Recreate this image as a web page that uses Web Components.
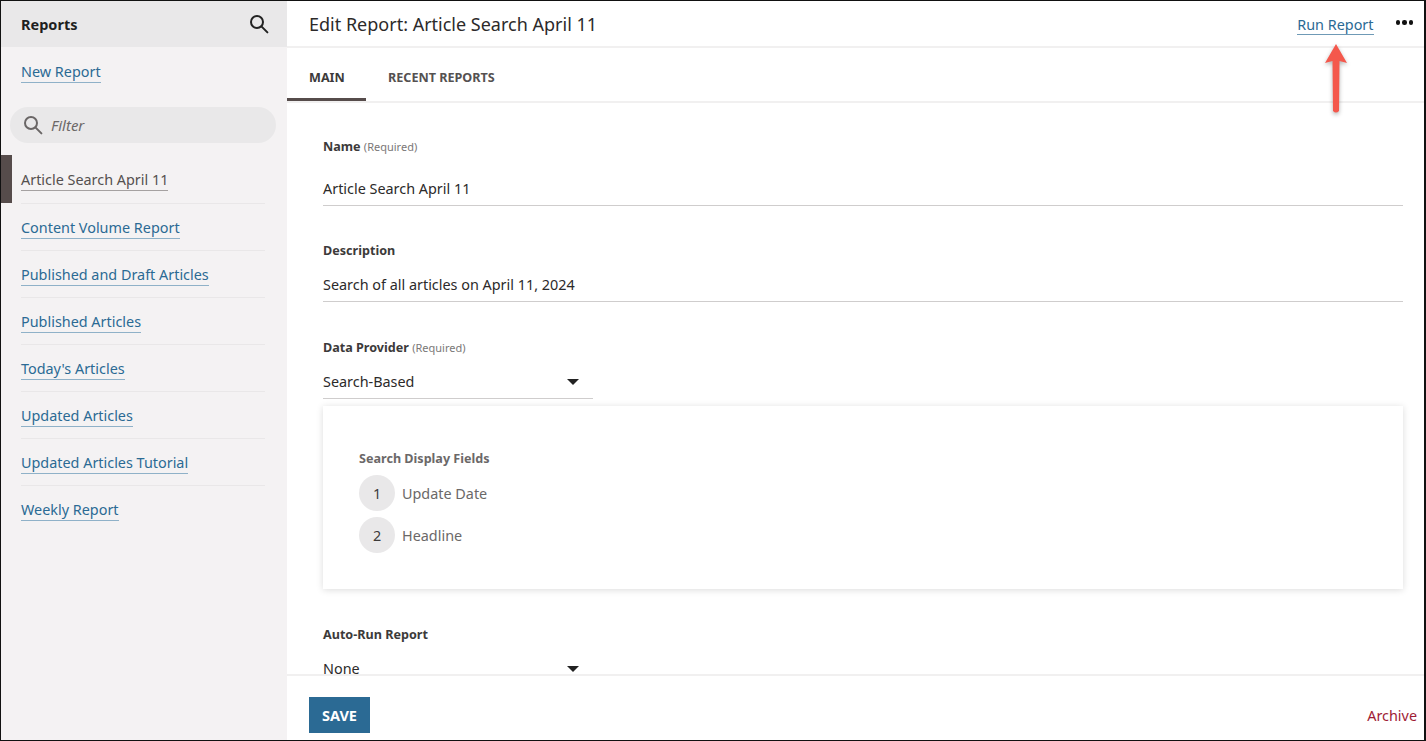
<!DOCTYPE html>
<html lang="en">
<head>
<meta charset="utf-8">
<title>Reports</title>
<style>
  html, body { margin: 0; height: 100%; background: #fff; }
  body { font-family: "Noto Sans", "Open Sans", sans-serif; overflow: hidden; }
</style>
</head>
<body>
<report-app>
  <report-sidebar slot="sidebar" active="Article Search April 11">
    <report-link href="#">Article Search April 11</report-link>
    <report-link href="#">Content Volume Report</report-link>
    <report-link href="#">Published and Draft Articles</report-link>
    <report-link href="#">Published Articles</report-link>
    <report-link href="#">Today's Articles</report-link>
    <report-link href="#">Updated Articles</report-link>
    <report-link href="#">Updated Articles Tutorial</report-link>
    <report-link href="#">Weekly Report</report-link>
  </report-sidebar>
  <report-editor slot="main"></report-editor>
</report-app>

<script>
const searchIcon = (size, color, sw) => `
  <svg width="${size}" height="${size}" viewBox="0 0 20 20" fill="none" stroke="${color}" stroke-width="${sw}" stroke-linecap="round">
    <circle cx="8" cy="8" r="6"/><path d="M12.4 12.4 18.4 18.4"/>
  </svg>`;

class ReportApp extends HTMLElement {
    constructor() {
        super();
        this.attachShadow({ mode: 'open' });
        this.shadowRoot.innerHTML = `
          <style>
            :host { display: flex; box-sizing: border-box; width: 1426px; height: 741px; border: solid #111; border-width: 1px 2px 1px 1px; position: relative; }
            ::slotted([slot=sidebar]) { flex: 0 0 286px; }
            ::slotted([slot=main]) { flex: 1; min-width: 0; }
          </style>
          <slot name="sidebar"></slot>
          <slot name="main"></slot>`;
    }
}

class ReportLink extends HTMLElement {
    constructor() {
        super();
        this.attachShadow({ mode: 'open' });
        this.shadowRoot.innerHTML = `
          <style>
            :host { display: block; height: 47.15px; box-sizing: border-box; padding-left: 20px; position: relative; }
            .row { height: 100%; box-sizing: border-box; margin-right: 22px; border-bottom: 1px solid #e9e7e8; padding-top: 12px; }
            :host(:last-child) .row { border-bottom: 0; }
            a { font-size: 14.4px; line-height: 20px; color: #2b6a94; text-decoration: none; border-bottom: 1px solid #8fb1c8; display: inline-block; height: 20px; }
            :host([active]) a { color: #55504f; border-bottom-color: #a5a1a1; }
            :host([active])::before { content: ''; position: absolute; left: 0; top: -1px; width: 11px; height: 48px; background: #564c4b; }
          </style>
          <div class="row"><a part="link"><slot></slot></a></div>`;
    }
    connectedCallback() {
        this.shadowRoot.querySelector('a').href = this.getAttribute('href') || '#';
    }
}

class ReportSidebar extends HTMLElement {
    constructor() {
        super();
        this.attachShadow({ mode: 'open' });
        this.shadowRoot.innerHTML = `
          <style>
            :host { display: block; background: #f4f2f3; height: 100%; }
            header { height: 46px; background: #e9e8e9; display: flex; align-items: center; justify-content: space-between; padding: 0 18px 0 20px; }
            h2 { margin: 0; font-size: 14.5px; font-weight: 700; color: #1f1f1f; }
            .new { display: block; margin: 13px 0 0 20px; height: 21px; }
            .new a { font-size: 14.4px; line-height: 20px; color: #2b6a94; text-decoration: none; border-bottom: 1px solid #8fb1c8; display: inline-block; height: 20px; }
            .filter { margin: 26px 11px 0 9px; height: 36px; border-radius: 18px; background: #e9e8e9; display: flex; align-items: center; padding-left: 13px; gap: 8px; }
            .filter span { font-size: 15px; font-style: italic; color: #6c6868; }
            .list { margin-top: 13.45px; }
          </style>
          <header><h2>Reports</h2>${searchIcon(20, '#222', 2)}</header>
          <div class="new"><a href="#">New Report</a></div>
          <div class="filter">${searchIcon(20, '#6a6666', 2)}<span>Filter</span></div>
          <div class="list"><slot></slot></div>`;
    }
    connectedCallback() {
        const active = this.getAttribute('active');
        this.querySelectorAll('report-link').forEach(l => {
            if (l.textContent.trim() === active) l.setAttribute('active', '');
        });
    }
}

class FormField extends HTMLElement {
    constructor() {
        super();
        this.attachShadow({ mode: 'open' });
    }
    connectedCallback() {
        const required = this.hasAttribute('required');
        const select = this.hasAttribute('select');
        this.shadowRoot.innerHTML = `
          <style>
            :host { display: block; }
            .label { font-size: 12.6px; line-height: 17px; font-weight: 700; color: #3c3a3a; }
            .label small { font-size: 11px; font-weight: 400; color: #7a7777; }
            .value { margin-top: 14px; height: 29px; box-sizing: border-box; border-bottom: 1px solid #cfcdcd; font-size: 14.4px; line-height: 20px; color: #2c2a2a; display: flex; justify-content: space-between; align-items: flex-start; padding-top: 2px; }
            :host([roomy]) .value { margin-top: 22px; }
            :host([select]) .value { width: 270px; }
            i { width: 0; height: 0; border: solid transparent; border-width: 6px 6px 0; border-top-color: #222; margin: 7px 14px 0 0; }
          </style>
          <div class="label">${this.getAttribute('label')}${required ? ' <small>(Required)</small>' : ''}</div>
          <div class="value"><span>${this.getAttribute('value')}</span>${select ? '<i></i>' : ''}</div>`;
    }
}

class DisplayFields extends HTMLElement {
    constructor() {
        super();
        this.attachShadow({ mode: 'open' });
        this.shadowRoot.innerHTML = `
          <style>
            :host { display: block; margin-top: 7px; height: 183px; box-sizing: border-box; padding: 44px 36px 0; background: #fff; box-shadow: 0 1px 7px rgba(0,0,0,.14); }
            h3 { margin: 0 0 8px; font-size: 12.6px; line-height: 17px; font-weight: 700; color: #6b6868; }
            ol { margin: 0; padding: 0; list-style: none; display: grid; gap: 6px; }
            li { display: flex; align-items: center; gap: 7px; font-size: 14.4px; color: #6b6868; }
            b { width: 36px; height: 36px; border-radius: 50%; background: #e9e8e9; display: grid; place-items: center; font-weight: 400; font-size: 14.4px; color: #3c3a3a; }
          </style>
          <h3>Search Display Fields</h3>
          <ol><li><b>1</b>Update Date</li><li><b>2</b>Headline</li></ol>`;
    }
}

class ReportEditor extends HTMLElement {
    constructor() {
        super();
        this.attachShadow({ mode: 'open' });
        this.shadowRoot.innerHTML = `
          <style>
            :host { display: flex; flex-direction: column; height: 100%; background: #fff; position: relative; min-width: 0; }
            header { flex: 0 0 47px; box-sizing: border-box; border-bottom: 2px solid #f1f0f0; display: flex; align-items: center; padding: 0 11px 0 22px; }
            h1 { margin: 0; flex: 1; font-size: 18px; font-weight: 400; color: #2c2a2a; }
            .run { font-size: 14.4px; color: #2b6a94; text-decoration: none; border-bottom: 1px solid #6f9ab6; height: 19px; line-height: 20px; margin-right: 22px; margin-top: 2px; }
            .dots { display: flex; gap: 2px; margin-top: -2px; }
            .dots span { width: 4.5px; height: 4.5px; border-radius: 50%; background: #111; }
            nav { flex: 0 0 53px; box-sizing: border-box; border-bottom: 2px solid #f1f0f0; display: flex; }
            nav a { font-size: 12.6px; font-weight: 700; height: 53px; box-sizing: border-box; padding: 21px 0 0 22px; white-space: nowrap; color: #555151; }
            nav a.on { width: 79px; color: #3c3a3a; border-bottom: 3px solid #564c4b; }
            .body { flex: 1; min-height: 0; overflow: hidden; padding: 35px 21px 0 36px; }
            form-field + form-field { margin-top: 37px; }
            form-field[roomy] + form-field { margin-top: 36px; }
            display-fields + form-field { margin-top: 37px; }
            footer { flex: 0 0 66px; box-sizing: border-box; border-top: 2px solid #f1f0f0; display: flex; align-items: center; justify-content: space-between; padding: 21px 7px 7px 22px; }
            button { width: 61px; height: 36px; border: 0; background: #2b6a94; color: #fff; font: 700 14.5px "Noto Sans", "Open Sans", sans-serif; padding: 0; }
            .arch { font-size: 14.4px; color: #a01c35; text-decoration: none; }
            .arrow { position: absolute; left: 1036px; top: 42px; filter: drop-shadow(0 2px 2px rgba(0,0,0,.3)); }
          </style>
          <header>
            <h1>Edit Report: Article Search April 11</h1>
            <a class="run" href="#">Run Report</a>
            <div class="dots"><span></span><span></span><span></span></div>
          </header>
          <nav><a class="on">MAIN</a><a>RECENT REPORTS</a></nav>
          <div class="body">
            <form-field label="Name" required roomy value="Article Search April 11"></form-field>
            <form-field label="Description" value="Search of all articles on April 11, 2024"></form-field>
            <form-field label="Data Provider" required select value="Search-Based"></form-field>
            <display-fields></display-fields>
            <form-field label="Auto-Run Report" select value="None"></form-field>
          </div>
          <footer><button>SAVE</button><a class="arch" href="#">Archive</a></footer>
          <svg class="arrow" width="26" height="72" viewBox="0 0 26 72">
            <path d="M13 1 24 20 16.5 18 16 68Q13 71 10 68L9.5 18 2 20Z" fill="#f4584c"/>
          </svg>`;
    }
}

customElements.define('report-app', ReportApp);
customElements.define('report-link', ReportLink);
customElements.define('report-sidebar', ReportSidebar);
customElements.define('form-field', FormField);
customElements.define('display-fields', DisplayFields);
customElements.define('report-editor', ReportEditor);
</script>
</body>
</html>
